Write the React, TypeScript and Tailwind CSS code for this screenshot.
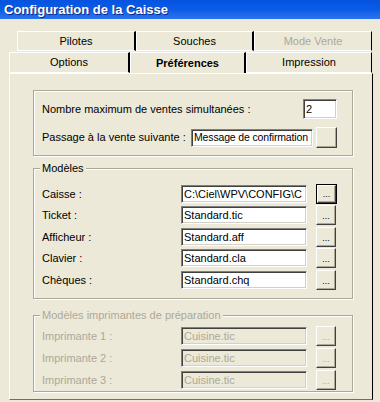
import React from 'react';

const sunken =
  'border border-t-[#808080] border-l-[#808080] border-b-white border-r-white shadow-[inset_1px_1px_0_#404040,inset_-1px_-1px_0_#D4D0C8]';
const raised =
  'border border-t-white border-l-white border-b-[#404040] border-r-[#404040] shadow-[inset_-1px_-1px_0_#ACA899]';
const etched = 'border border-[#ACA899] shadow-[inset_1px_1px_0_#ffffff,1px_1px_0_#ffffff]';

const TextBox: React.FC<{ value: string; disabled?: boolean; className?: string }> = ({ value, disabled, className }) => (
  <div
    className={`${sunken} ${className ?? ''} ${
      disabled ? 'bg-[#ECE9D8] text-[#ACA899]' : 'bg-white text-black'
    } flex items-center pl-[2px] overflow-hidden whitespace-nowrap`}
  >
    {value}
  </div>
);

const DotsButton: React.FC<{ focused?: boolean; disabled?: boolean }> = ({ focused, disabled }) => {
  const btn = (
    <div
      className={`${raised} w-full h-full flex items-end justify-center pb-[3px] text-[9px] leading-none ${
        disabled ? 'text-[#ACA899]' : 'text-black'
      }`}
    >
      ...
    </div>
  );
  if (focused) {
    return <div className="w-[21px] h-[20px] border border-black">{btn}</div>;
  }
  return <div className="w-[20px] h-[20px]">{btn}</div>;
};

const Group: React.FC<{ label?: string; disabled?: boolean; className?: string; children: React.ReactNode }> = ({
  label,
  disabled,
  className,
  children,
}) => (
  <div className={`relative ${etched} w-[320px] ${className ?? ''}`}>
    {label && (
      <span
        className={`absolute -top-[8px] left-[6px] px-[2px] bg-[#ECE9D8] leading-[14px] ${
          disabled ? 'text-[#ACA899]' : 'text-black'
        }`}
      >
        {label}
      </span>
    )}
    {children}
  </div>
);

const FileRow: React.FC<{ label: string; value: string; focused?: boolean; disabled?: boolean; h: string }> = ({
  label,
  value,
  focused,
  disabled,
  h,
}) => (
  <div className={`flex items-center ${h}`}>
    <span className={`w-[139px] ${disabled ? 'text-[#ACA899]' : 'text-black'}`}>{label}</span>
    <TextBox value={value} disabled={disabled} className="w-[126px] h-[18px]" />
    <div className="ml-[9px]">
      <DotsButton focused={focused} disabled={disabled} />
    </div>
  </div>
);

const Tab: React.FC<{ label: string; w: string; selected?: boolean; disabled?: boolean; last?: boolean }> = ({
  label,
  w,
  selected,
  disabled,
  last,
}) => (
  <div
    className={`${w} h-full flex items-center justify-center border-t border-l border-t-white border-l-white ${
      last ? 'border-r border-r-black' : 'border-r-2 border-r-black'
    } ${selected ? 'font-bold relative z-10 -mt-[1px] h-[22px]' : 'border-b border-b-white'} ${
      disabled ? 'text-[#ACA899]' : 'text-black'
    }`}
  >
    {label}
  </div>
);

export default function App() {
  return (
    <div className="w-[380px] h-[402px] overflow-hidden bg-[#ECE9D8] font-['Liberation_Sans',Arial,sans-serif] text-[11px] flex flex-col">
      <div className="h-[19px] shrink-0 bg-gradient-to-b from-[#0553DF] via-[#0A5CE6] to-[#2C74EC] pl-[4px] flex items-center">
        <span className="text-white font-bold text-[13px] [text-shadow:1px_1px_0_#0B2B8A]">Configuration de la Caisse</span>
      </div>

      <div className="mt-[12px] ml-[17px] h-[20px] flex">
        <Tab label="Pilotes" w="w-[119px]" />
        <Tab label="Souches" w="w-[118px]" />
        <Tab label="Mode Vente" w="w-[118px]" disabled last />
      </div>
      <div className="mt-[1px] ml-[9px] h-[21px] flex items-end">
        <Tab label="Options" w="w-[121px]" />
        <Tab label="Préférences" w="w-[116px]" selected />
        <Tab label="Impression" w="w-[126px]" last />
      </div>

      <div className="ml-[9px] w-[364px] h-[327px] border-l border-t border-l-white border-t-white border-r border-r-black border-b border-b-[#716F64] pl-[23px] pt-[16px]">
        <Group className="h-[66px] pt-[8px] pl-[8px] pr-[15px]">
          <div className="h-[20px] flex items-center justify-between">
            <span>Nombre maximum de ventes simultanées :</span>
            <TextBox value="2" className="w-[34px] h-[20px]" />
          </div>
          <div className="mt-[8px] h-[21px] flex items-center">
            <span className="w-[149px]">Passage à la vente suivante :</span>
            <TextBox
              value="Message de confirmation"
              className="w-[122px] h-[18px] text-[10.5px] tracking-[-0.15px]"
            />
            <div className={`${raised} ml-[3px] w-[21px] h-[21px]`} />
          </div>
        </Group>

        <Group label="Modèles" className="mt-[12px] h-[131px] pt-[14px] pl-[8px]">
          <FileRow label="Caisse :" value="C:\Ciel\WPV\CONFIG\C" focused h="h-[21.5px]" />
          <FileRow label="Ticket :" value="Standard.tic" h="h-[21.5px]" />
          <FileRow label="Afficheur :" value="Standard.aff" h="h-[21.5px]" />
          <FileRow label="Clavier :" value="Standard.cla" h="h-[21.5px]" />
          <FileRow label="Chèques :" value="Standard.chq" h="h-[21.5px]" />
        </Group>

        <Group label="Modèles imprimantes de préparation" disabled className="mt-[16px] h-[77px] pt-[9px] pl-[8px]">
          <FileRow label="Imprimante 1 :" value="Cuisine.tic" disabled h="h-[22px]" />
          <FileRow label="Imprimante 2 :" value="Cuisine.tic" disabled h="h-[22px]" />
          <FileRow label="Imprimante 3 :" value="Cuisine.tic" disabled h="h-[22px]" />
        </Group>
      </div>
    </div>
  );
}
